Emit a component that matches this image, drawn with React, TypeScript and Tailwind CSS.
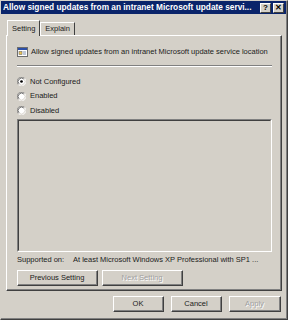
import React from 'react';

const font = { fontFamily: '"Liberation Sans", Arial, sans-serif' };

function Radio({ checked }: { checked?: boolean }) {
  return (
    <svg width="9" height="9" viewBox="0 0 12 12" className="shrink-0">
      <circle cx="6" cy="6" r="5" fill="#ffffff" />
      <path d="M10.2 1.8 A5.5 5.5 0 0 0 1.8 10.2" fill="none" stroke="#808080" strokeWidth="1" />
      <path d="M1.8 10.2 A5.5 5.5 0 0 0 10.2 1.8" fill="none" stroke="#ffffff" strokeWidth="1" />
      <path d="M9.2 2.8 A4.5 4.5 0 0 0 2.8 9.2" fill="none" stroke="#404040" strokeWidth="1" />
      <path d="M2.8 9.2 A4.5 4.5 0 0 0 9.2 2.8" fill="none" stroke="#d4d0c8" strokeWidth="1" />
      {checked && <circle cx="6" cy="6" r="1.8" fill="#000000" />}
    </svg>
  );
}

function Button({ label, disabled, className }: { label: string; disabled?: boolean; className?: string }) {
  return (
    <div className={`border-t border-l border-white border-r border-b border-r-[#404040] border-b-[#404040] ${className ?? ''}`}>
      <div className="h-full border-r border-b border-[#808080] flex items-center justify-center">
        <span className={`text-[7.5px] leading-none ${disabled ? 'text-[#a0a0a0] [text-shadow:1px_1px_0_#ffffff]' : 'text-[#202020]'}`}>
          {label}
        </span>
      </div>
    </div>
  );
}

function TitleButton({ children }: { children: React.ReactNode }) {
  return (
    <div className="w-[11px] h-[10px] bg-[#d4d0c8] border-t border-l border-white border-r border-b border-r-[#404040] border-b-[#404040] flex items-center justify-center">
      <span className="text-[8px] font-bold leading-none text-black">{children}</span>
    </div>
  );
}

function PolicyIcon() {
  return (
    <svg width="11" height="10" viewBox="0 0 11 10" className="shrink-0">
      <rect x="0.5" y="0.5" width="10" height="9" fill="#ffffff" stroke="#6d6d6d" />
      <rect x="1" y="1" width="9" height="2" fill="#2c4fa8" />
      <rect x="2" y="4.5" width="3" height="3" fill="#e8c050" stroke="#6d6d6d" strokeWidth="0.6" />
      <rect x="6" y="4.5" width="3" height="1" fill="#8090b0" />
      <rect x="6" y="6.5" width="3" height="1" fill="#8090b0" />
    </svg>
  );
}

export default function App() {
  return (
    <div style={font} className="w-[288px] h-[320px] bg-[#d4d0c8] text-[#202020] border-t border-l border-[#d4d0c8] border-r border-b border-r-[#404040] border-b-[#404040]">
      <div className="h-full flex flex-col border-r border-b border-[#808080]">
        {/* title bar */}
        <div className="h-[13px] bg-[#0a246a] flex items-center pl-[2px] pr-[2px]">
          <span className="flex-1 text-white font-bold text-[8.3px] leading-none whitespace-nowrap overflow-hidden">
            Allow signed updates from an intranet Microsoft update servi...
          </span>
          <div className="flex gap-[2px]">
            <TitleButton>?</TitleButton>
            <TitleButton>✕</TitleButton>
          </div>
        </div>

        {/* tabs */}
        <div className="flex items-end h-[21px] pl-[6px]">
          <div className="relative z-10 h-[16px] -mb-[1px] px-[4px] bg-[#d4d0c8] border-t border-l border-white border-r border-r-[#404040] flex items-center">
            <span className="text-[7.5px] leading-none">Setting</span>
          </div>
          <div className="h-[13px] px-[4px] border-t border-l border-white border-r border-r-[#404040] flex items-center">
            <span className="text-[7.5px] leading-none">Explain</span>
          </div>
        </div>

        {/* panel */}
        <div className="ml-[5px] mr-[4px] h-[256px] border-t border-l border-white border-r border-b border-r-[#404040] border-b-[#404040]">
          <div className="h-full border-r border-b border-[#808080] pl-[10px] pr-[8px] pt-[11px] flex flex-col">
            <div className="flex items-center gap-[3px] h-[10px]">
              <PolicyIcon />
              <span className="text-[7.5px] leading-none whitespace-nowrap">
                Allow signed updates from an intranet Microsoft update service location
              </span>
            </div>
            <div className="mt-[8px] h-[2px] border-t border-[#808080] border-b border-b-white" />
            <div className="mt-[10px] flex flex-col gap-[5.5px]">
              <label className="flex items-center gap-[4px] h-[9px]">
                <Radio checked />
                <span className="text-[7.5px] leading-none">Not Configured</span>
              </label>
              <label className="flex items-center gap-[4px] h-[9px]">
                <Radio />
                <span className="text-[7.5px] leading-none">Enabled</span>
              </label>
              <label className="flex items-center gap-[4px] h-[9px]">
                <Radio />
                <span className="text-[7.5px] leading-none">Disabled</span>
              </label>
            </div>
            <div className="mt-[4px] h-[133px] border-t border-l border-[#808080] border-r border-b border-r-white border-b-white">
              <div className="h-full border-t border-l border-[#404040] border-r border-b border-r-[#d4d0c8] border-b-[#d4d0c8]" />
            </div>
            <div className="mt-[3px] flex items-center h-[10px] text-[7.5px] leading-none whitespace-nowrap">
              <span className="w-[56px]">Supported on:</span>
              <span>At least Microsoft Windows XP Professional with SP1 ...</span>
            </div>
            <div className="mt-[5px] flex gap-[4px]">
              <Button label="Previous Setting" className="w-[81px] h-[16px]" />
              <Button label="Next Setting" disabled className="w-[81px] h-[16px]" />
            </div>
          </div>
        </div>

        {/* bottom buttons */}
        <div className="mt-[5px] flex justify-end gap-[7px] pr-[5px]">
          <Button label="OK" className="w-[51px] h-[16px]" />
          <Button label="Cancel" className="w-[51px] h-[16px]" />
          <Button label="Apply" disabled className="w-[52px] h-[16px]" />
        </div>
      </div>
    </div>
  );
}
